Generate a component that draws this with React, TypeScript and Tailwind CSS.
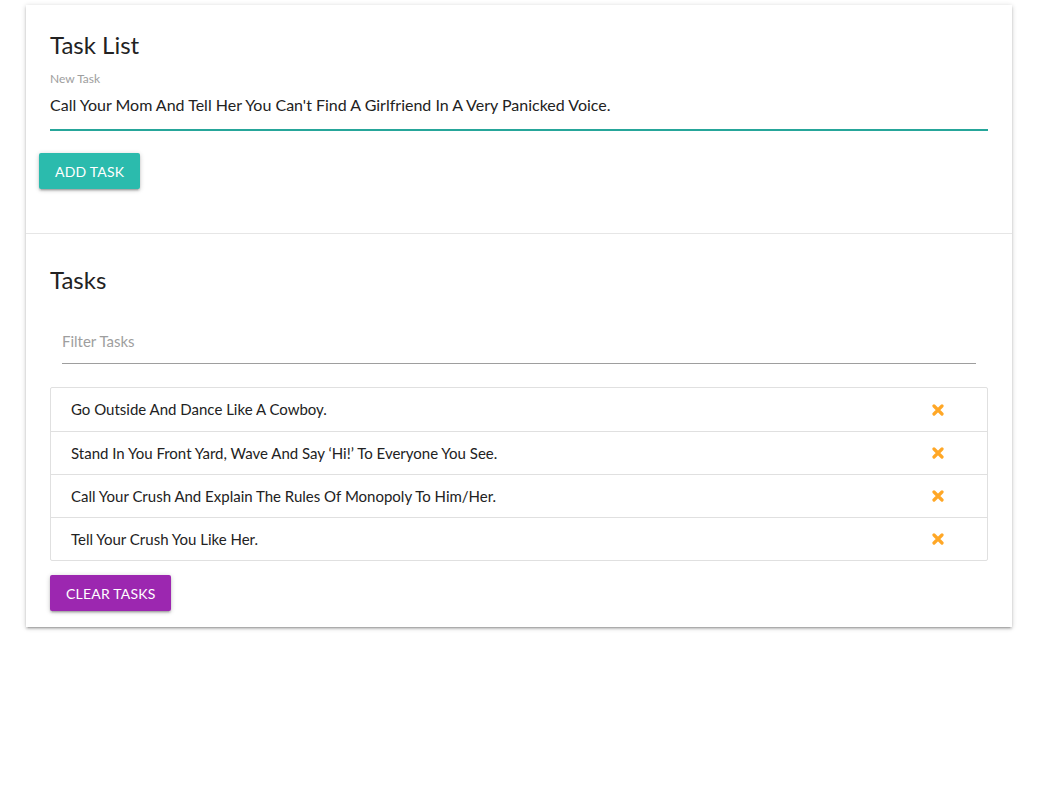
import { useState } from 'react';

const INITIAL_TASKS = [
  'Go Outside And Dance Like A Cowboy.',
  "Stand In You Front Yard, Wave And Say \u2018Hi!\u2019 To Everyone You See.",
  'Call Your Crush And Explain The Rules Of Monopoly To Him/Her.',
  'Tell Your Crush You Like Her.',
];

function RemoveIcon() {
  return (
    <svg width="12" height="12" viewBox="0 0 12 12" className="text-[#ffa726]">
      <path d="M2 2 L10 10 M10 2 L2 10" stroke="currentColor" strokeWidth="3.2" strokeLinecap="round" />
    </svg>
  );
}

export default function App() {
  const [newTask, setNewTask] = useState(
    "Call Your Mom And Tell Her You Can't Find A Girlfriend In A Very Panicked Voice."
  );
  const [tasks, setTasks] = useState(INITIAL_TASKS);
  const [filter, setFilter] = useState('');

  const shown = tasks.filter((t) => t.toLowerCase().includes(filter.toLowerCase()));

  return (
    <div className="min-h-[791px] bg-white pt-[5px] pl-[26px] pr-[25px] font-['Lato','Open_Sans',sans-serif] text-[#222]">
      <div className="bg-white shadow-[0_2px_2px_0_rgba(0,0,0,0.14),0_3px_1px_-2px_rgba(0,0,0,0.12),0_1px_5px_0_rgba(0,0,0,0.2)]">
        {/* NEW TASK */}
        <div className="px-6 pt-[26px] pb-11">
          <h2 className="text-[24px] leading-[28px] font-normal">Task List</h2>
          <div className="mt-[13px]">
            <label className="block text-[12px] leading-[14px] text-[#9e9e9e]">New Task</label>
            <div className="border-b-2 border-[#26a69a]">
              <input
                value={newTask}
                onChange={(e) => setNewTask(e.target.value)}
                className="w-full h-[43px] pb-[6px] text-[16px] outline-none bg-transparent"
              />
            </div>
          </div>
          <button
            onClick={() => {
              if (newTask.trim()) setTasks([...tasks, newTask.trim()]);
            }}
            className="mt-[22px] -ml-[11px] h-9 px-4 rounded-[2px] bg-[#2bbbad] text-white text-[14px] uppercase tracking-[0.2px] shadow-[0_2px_2px_0_rgba(0,0,0,0.14),0_3px_1px_-2px_rgba(0,0,0,0.12),0_1px_5px_0_rgba(0,0,0,0.2)]"
          >
            Add Task
          </button>
        </div>

        {/* TASKS */}
        <div className="border-t border-[#e6e6e6] px-6 pt-8 pb-4">
          <h2 className="text-[24px] leading-[28px] font-normal">Tasks</h2>
          <div className="mt-[25px] px-3">
            <input
              value={filter}
              onChange={(e) => setFilter(e.target.value)}
              placeholder="Filter Tasks"
              className="w-full h-[45px] text-[15px] outline-none border-b border-[#9e9e9e] placeholder:text-[#9e9e9e]"
            />
          </div>
          <ul className="mt-[23px] border border-[#e0e0e0] rounded-[2px]">
            {shown.map((t, i) => (
              <li
                key={t}
                className={`flex items-center justify-between h-[43px] pl-5 pr-[43px] text-[15px] ${
                  i > 0 ? 'border-t border-[#e0e0e0]' : ''
                }`}
              >
                <span>{t}</span>
                <button onClick={() => setTasks(tasks.filter((x) => x !== t))}>
                  <RemoveIcon />
                </button>
              </li>
            ))}
          </ul>
          <button
            onClick={() => setTasks([])}
            className="mt-[14px] h-9 px-4 rounded-[2px] bg-[#9c27b0] text-white text-[14px] uppercase tracking-[0.2px] shadow-[0_2px_2px_0_rgba(0,0,0,0.14),0_3px_1px_-2px_rgba(0,0,0,0.12),0_1px_5px_0_rgba(0,0,0,0.2)]"
          >
            Clear Tasks
          </button>
        </div>
      </div>
    </div>
  );
}
